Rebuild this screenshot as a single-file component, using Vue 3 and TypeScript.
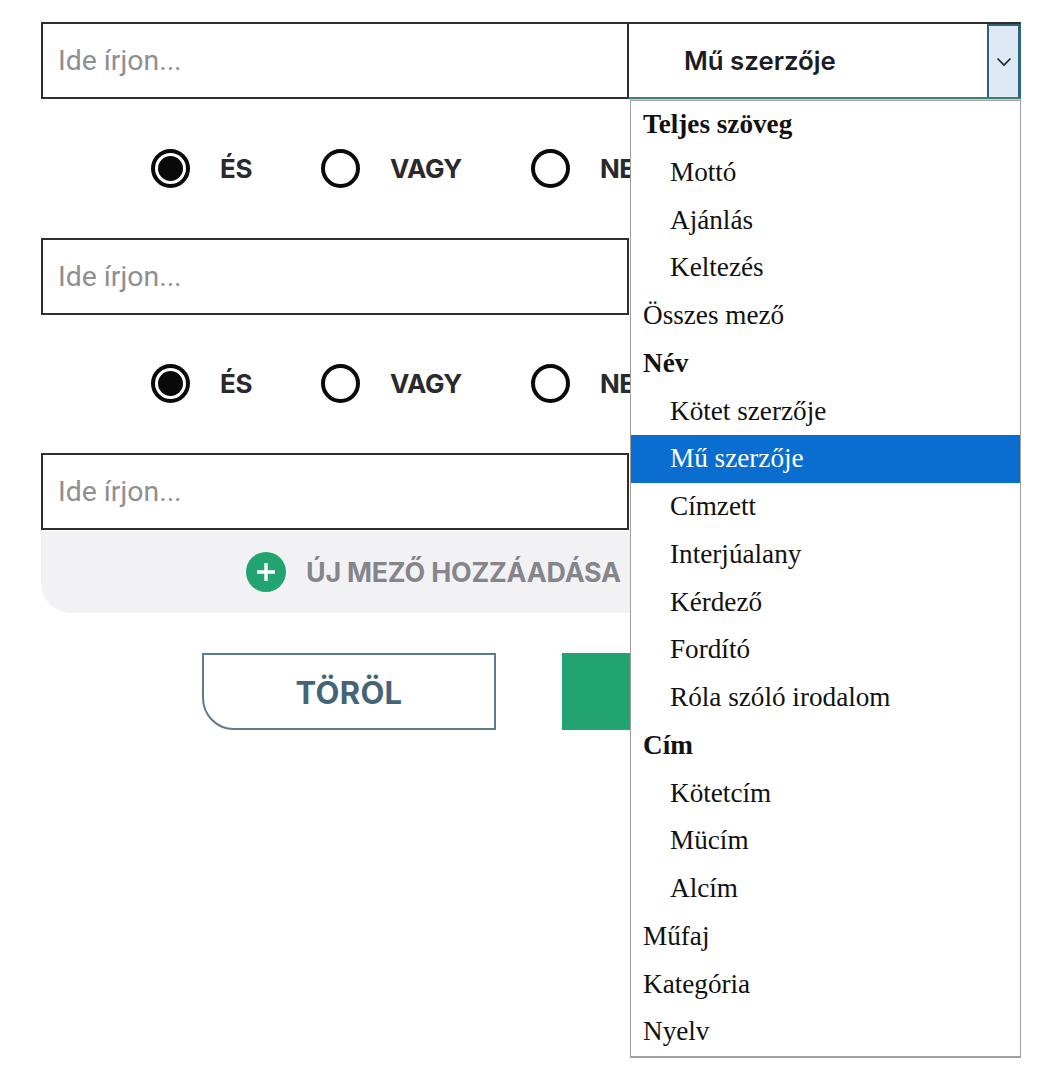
<script setup lang="ts">
import { ref } from "vue";

interface Option {
    label: string;
    kind: "group" | "child" | "plain";
}

const rows = ["row1", "row2", "row3"];
const radios = ["ÉS", "VAGY", "NEM"];
const selected = ref("Mű szerzője");

const options: Option[] = [
    { label: "Teljes szöveg", kind: "group" },
    { label: "Mottó", kind: "child" },
    { label: "Ajánlás", kind: "child" },
    { label: "Keltezés", kind: "child" },
    { label: "Összes mező", kind: "plain" },
    { label: "Név", kind: "group" },
    { label: "Kötet szerzője", kind: "child" },
    { label: "Mű szerzője", kind: "child" },
    { label: "Címzett", kind: "child" },
    { label: "Interjúalany", kind: "child" },
    { label: "Kérdező", kind: "child" },
    { label: "Fordító", kind: "child" },
    { label: "Róla szóló irodalom", kind: "child" },
    { label: "Cím", kind: "group" },
    { label: "Kötetcím", kind: "child" },
    { label: "Mücím", kind: "child" },
    { label: "Alcím", kind: "child" },
    { label: "Műfaj", kind: "plain" },
    { label: "Kategória", kind: "plain" },
    { label: "Nyelv", kind: "plain" },
];
</script>

<template>
    <div class="page">
        <div class="form">
            <template v-for="(row, i) in rows" :key="row">
                <div class="search-row">
                    <input class="text-input" type="text" placeholder="Ide írjon..." />
                    <div v-if="i === 0" class="select">
                        <span class="select-value">{{ selected }}</span>
                        <span class="select-arrow">
                            <svg width="16" height="10" viewBox="0 0 16 10" fill="none">
                                <path d="M1.5 1.5 8 8l6.5-6.5" stroke="#222" stroke-width="1.6" />
                            </svg>
                        </span>
                    </div>
                </div>
                <div v-if="i < 2" class="radio-row">
                    <label v-for="(r, j) in radios" :key="r" class="radio">
                        <span class="radio-mark" :class="{ on: j === 0 }"></span>
                        <span class="radio-text">{{ r }}</span>
                    </label>
                </div>
            </template>

            <div class="add-panel">
                <span class="add-icon">
                    <svg width="24" height="24" viewBox="0 0 24 24" fill="none">
                        <path d="M12 3v18M3 12h18" stroke="#fff" stroke-width="3.4" />
                    </svg>
                </span>
                <span class="add-text">ÚJ MEZŐ HOZZÁADÁSA</span>
            </div>

            <div class="buttons">
                <button class="btn btn-clear">TÖRÖL</button>
                <button class="btn btn-search" aria-label="Keresés"></button>
            </div>
        </div>

        <ul class="dropdown">
            <li
                v-for="o in options"
                :key="o.label"
                class="option"
                :class="[o.kind, { active: o.label === selected }]"
            >
                {{ o.label }}
            </li>
        </ul>
    </div>
</template>

<style>
html,
body {
    background: #fff;
}
</style>

<style scoped>
.page {
    position: relative;
    width: 1051px;
    height: 1080px;
    box-sizing: border-box;
    padding: 22px 30px 0 41px;
    overflow: hidden;
    font-family: Inter, "Open Sans", sans-serif;
}

.search-row {
    display: flex;
    height: 77px;
}

.text-input {
    width: 588px;
    height: 77px;
    box-sizing: border-box;
    border: 2px solid #2e2e2e;
    border-radius: 0;
    padding: 0 15px;
    font-family: Roboto, sans-serif;
    font-size: 28.4px;
    outline: none;
}

.text-input::placeholder {
    color: #8f8f92;
    opacity: 1;
}

.select {
    flex: 1;
    display: flex;
    justify-content: space-between;
    box-sizing: border-box;
    margin-left: -1px;
    border: 2px solid #2e2e2e;
    border-left-width: 1px;
    border-right: 1px solid #2f6a78;
    border-bottom-color: #3f7f78;
    padding-left: 55px;
    box-shadow: 0 1px 0 #a6e6d6;
}

.select-value {
    align-self: center;
    font-size: 25.8px;
    font-weight: 600;
    color: #1d1d1f;
}

.select-arrow {
    width: 33px;
    display: flex;
    align-items: center;
    justify-content: center;
    box-sizing: border-box;
    border: 2px solid #2f6278;
    border-bottom-width: 0;
    background: #dfe9f5;
}

.radio-row {
    display: flex;
    align-items: center;
    gap: 69px;
    height: 138.5px;
    padding-left: 110px;
}

.radio {
    display: flex;
    align-items: center;
    gap: 30px;
}

.radio-mark {
    width: 39px;
    height: 39px;
    box-sizing: border-box;
    border: 4px solid #0a0a0a;
    border-radius: 50%;
    background: #fff;
}

.radio-mark.on {
    padding: 3px;
    background: #0a0a0a content-box;
}

.radio-text {
    font-size: 26px;
    font-weight: 700;
    letter-spacing: -0.4px;
    color: #2a2a2e;
}

.add-panel {
    display: flex;
    align-items: center;
    gap: 20px;
    height: 82px;
    margin-top: 1px;
    padding-left: 205px;
    background: #f2f2f4;
    border-bottom-left-radius: 30px;
}

.add-icon {
    width: 40px;
    height: 40px;
    border-radius: 50%;
    background: #22a372;
    display: flex;
    align-items: center;
    justify-content: center;
}

.add-text {
    font-size: 26.8px;
    font-weight: 700;
    letter-spacing: -0.2px;
    color: #85858b;
}

.buttons {
    display: flex;
    gap: 66px;
    margin-top: 40px;
    padding-left: 161px;
}

.btn {
    width: 294px;
    height: 77px;
    box-sizing: border-box;
    padding-top: 2px;
    font-family: Inter, sans-serif;
    font-size: 31px;
    font-weight: 700;
    letter-spacing: 0.3px;
}

.btn-clear {
    background: #fff;
    color: #466478;
    border: 2px solid #5f7a88;
    border-bottom-left-radius: 32px;
}

.btn-search {
    background: #22a372;
    border: none;
}

.dropdown {
    position: absolute;
    left: 630px;
    top: 100px;
    width: 391px;
    height: 958px;
    box-sizing: border-box;
    margin: 0;
    padding: 0;
    list-style: none;
    background: #fff;
    border: 1px solid #a0a0a0;
    border-bottom-width: 2px;
    font-family: "Liberation Serif", serif;
    font-size: 27.2px;
    color: #111;
}

.option {
    height: 47.75px;
    line-height: 47.75px;
    padding-left: 12px;
    white-space: nowrap;
}

.option.group {
    font-weight: 700;
}

.option.child {
    padding-left: 39px;
}

.option.active {
    background: #0a6ed1;
    color: #fff;
}
</style>
